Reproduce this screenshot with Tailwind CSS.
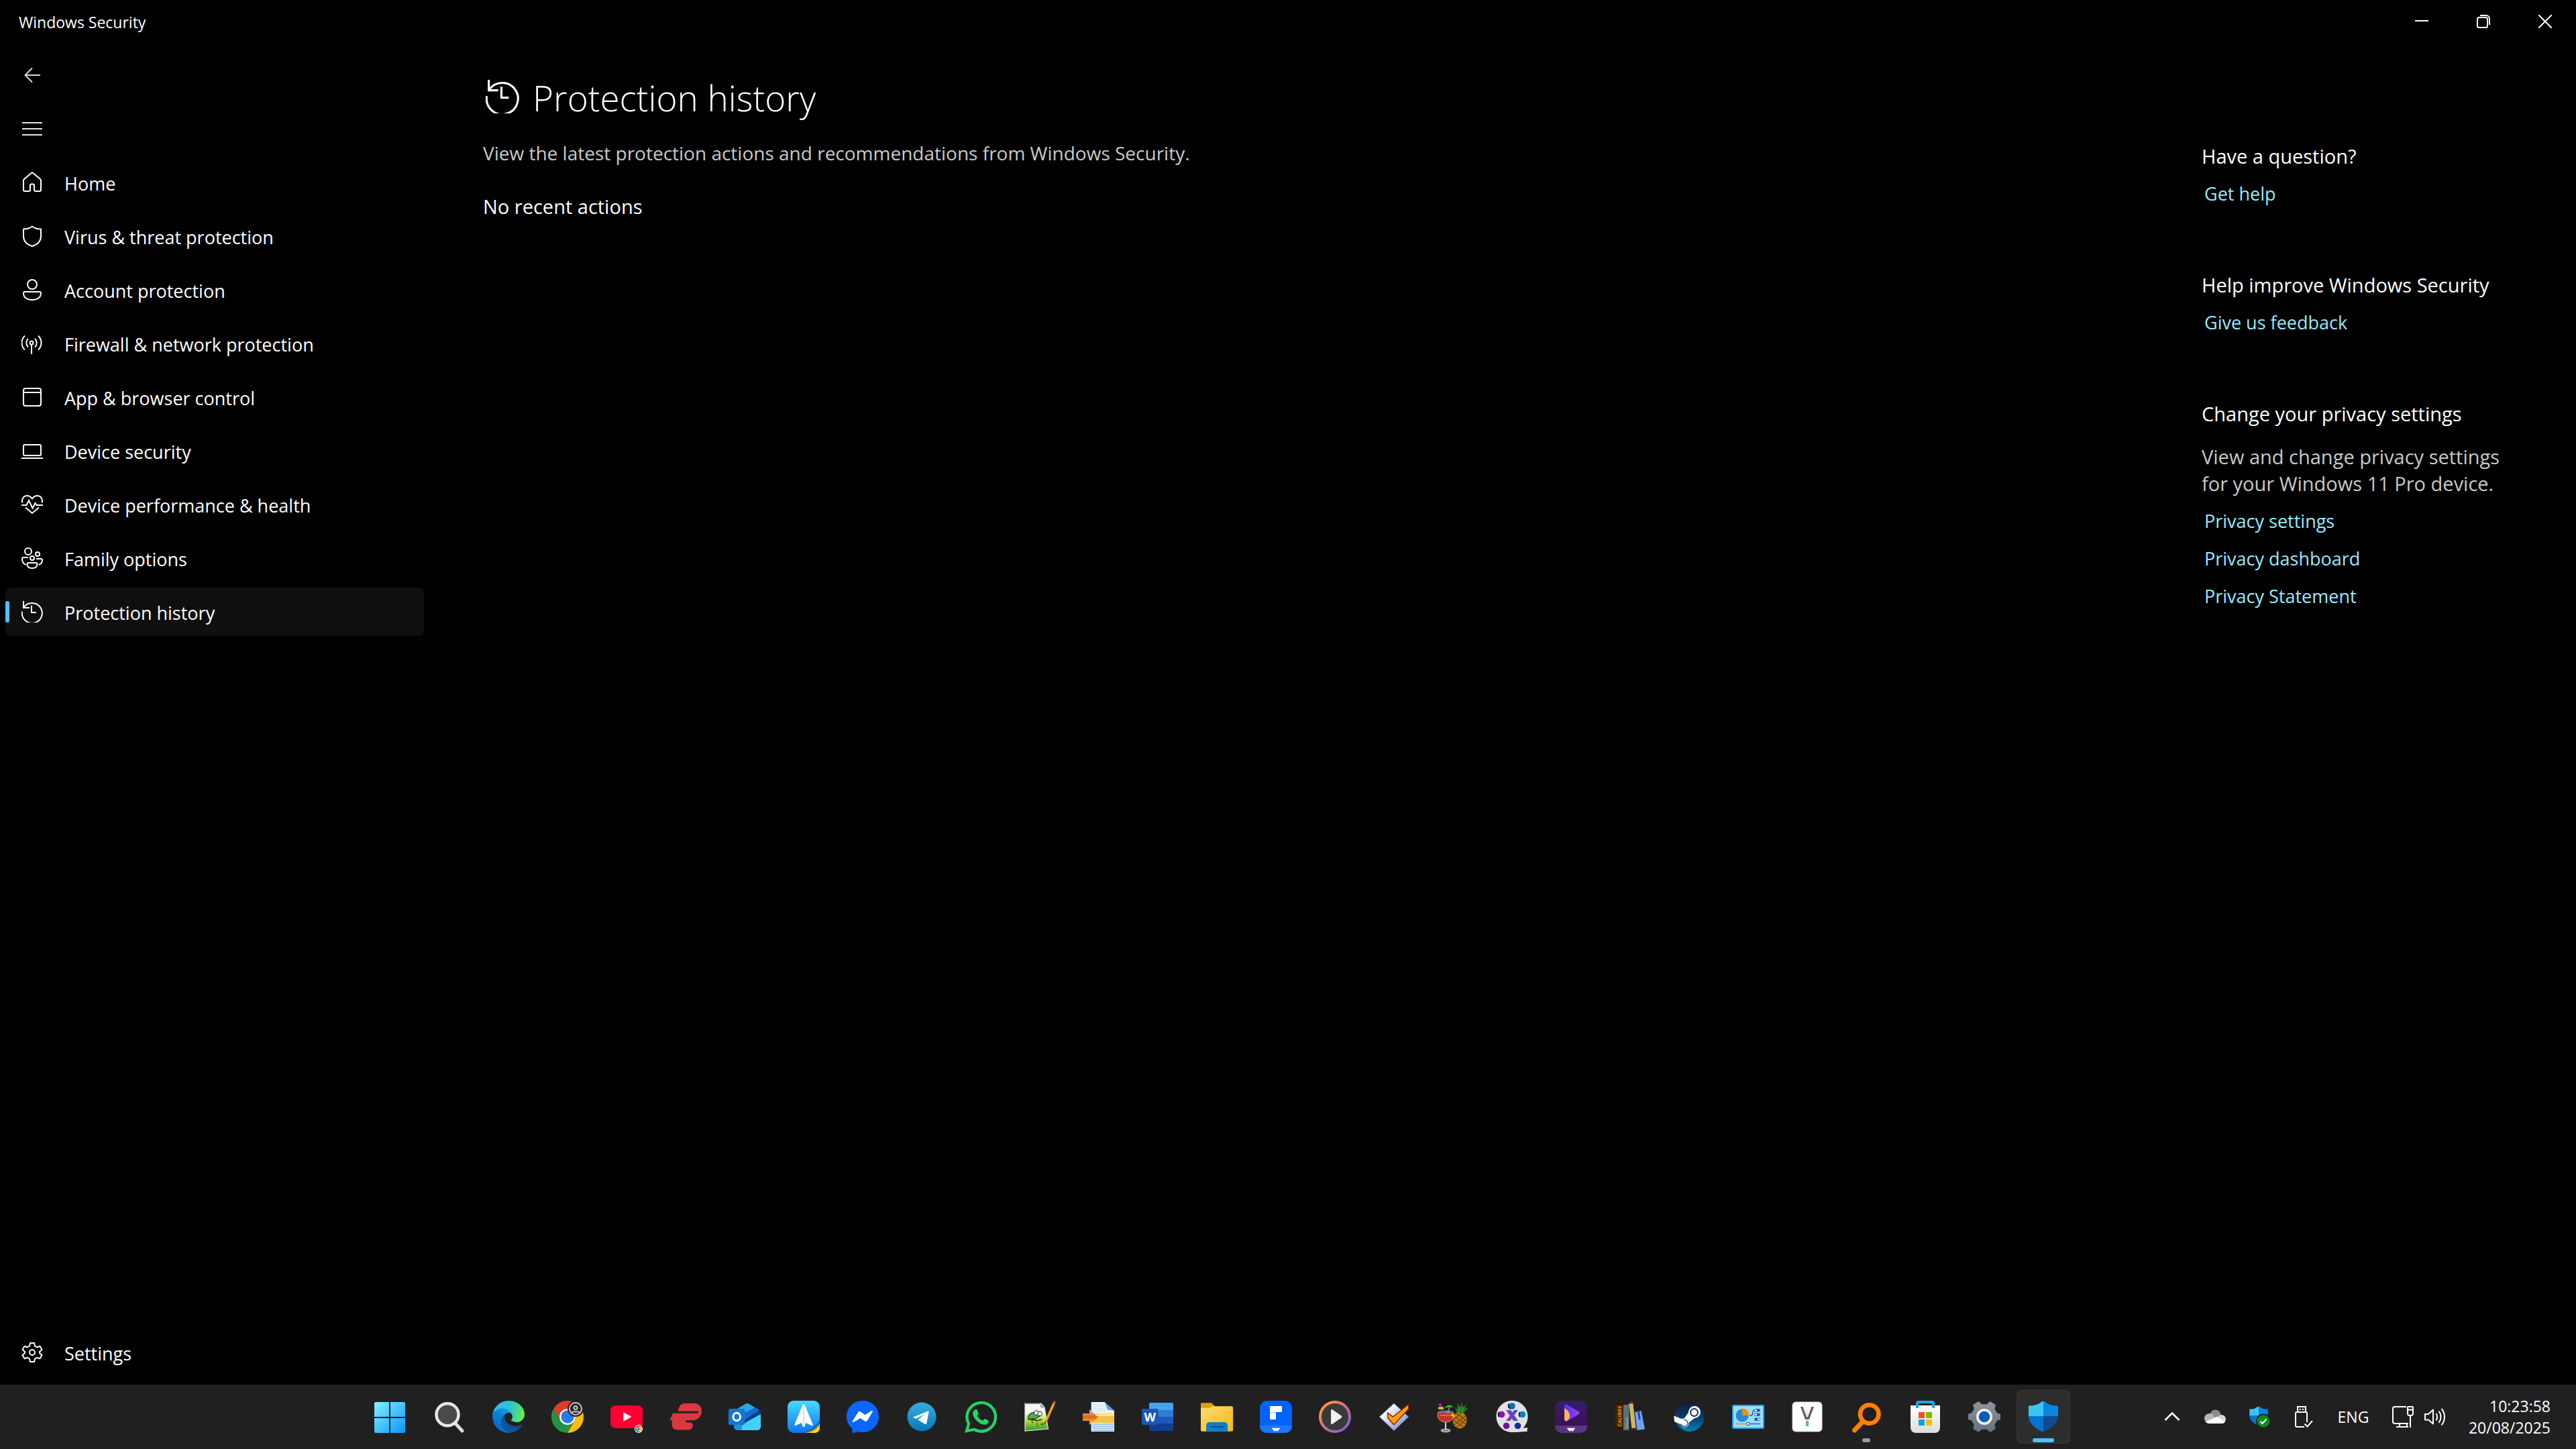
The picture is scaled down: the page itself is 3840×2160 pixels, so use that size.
<!DOCTYPE html>
<html lang="en">
<head>
    <meta charset="UTF-8">
    <meta name="viewport" content="width=device-width, initial-scale=1.0">
    <title>Windows Security</title>
    <script src="https://cdn.jsdelivr.net/npm/@tailwindcss/browser@4"></script>
</head>
<body class="min-h-screen flex flex-col bg-black text-white font-['Open_Sans',sans-serif] text-[27px] leading-10">
    <!-- Shared icons -->
    <svg class="hidden">
        <symbol id="history" viewBox="0 0 32 32">
            <g fill="none" stroke="currentColor" stroke-width="2">
                <path d="M3 0v10h9" />
                <path d="M3.3 9.6A15 15 0 1 1 1 15.5" />
                <path d="M15 6.5v10.500h7" />
            </g>
        </symbol>
        <symbol id="chrome" viewBox="0 0 48 48">
            <path fill="#dd3d2f" d="M24 12h20.780A24 24 0 0 0 3.200 12L13.600 30A12 12 0 0 1 24 12z" />
            <path fill="#249245" d="M13.600 30L3.200 12A24 24 0 0 0 24 48L34.400 30A12 12 0 0 1 13.600 30z" />
            <path fill="#f9bc10" d="M34.400 30L24 48A24 24 0 0 0 44.780 12H24A12 12 0 0 1 34.400 30z" />
            <circle cx="24" cy="24" r="12" fill="#fff" />
            <circle cx="24" cy="24" r="9.700" fill="#2a7af0" />
        </symbol>
        <symbol id="shield" viewBox="0 0 48 48">
            <path fill="#39c5f3" d="M24 1v22H2V7.500c9 0 14-1.500 18-5C21.500 1.300 22.500 1 24 1z" />
            <path fill="#0b84de" d="M24 1v22h22V7.500c-9 0-14-1.500-18-5C26.500 1.300 25.500 1 24 1z" />
            <path fill="#0472cf" d="M2 23h22v24C11 41 2 33 2 23z" />
            <path fill="#124a8d" d="M46 23H24v24c13-6 22-14 22-24z" />
        </symbol>
        <symbol id="wave" viewBox="0 0 12 6">
            <path d="M0 1.500L1.500 0 3 1.500 4.500 0 6 1.500 7.500 0 9 1.500 10.500 0 12 1.500 8 6 6 4 4 6z" fill="#fff" />
        </symbol>
    </svg>

    <!-- Title bar -->
    <header class="flex items-center justify-between h-16 pl-7">
        <span class="pt-0.5 text-[23px]">Windows Security</span>
        <div class="flex h-full">
            <button aria-label="Minimise" class="w-23 flex items-center justify-center">
                <svg class="size-5" viewBox="0 0 20 20" stroke="#fff" stroke-width="2"><path d="M0 9h20" /></svg>
            </button>
            <button aria-label="Restore" class="w-23 flex items-center justify-center">
                <svg class="size-5" viewBox="0 0 20 20" fill="none" stroke="#fff" stroke-width="2"><rect x="1" y="4" width="15" height="15" rx="2.500" /><path d="M5 1h9a5 5 0 0 1 5 5v9" /></svg>
            </button>
            <button aria-label="Close" class="w-23 flex items-center justify-center">
                <svg class="size-5" viewBox="0 0 20 20" stroke="#fff" stroke-width="2"><path d="M0 0l20 20M20 0L0 20" /></svg>
            </button>
        </div>
    </header>

    <div class="flex flex-1">
        <!-- Navigation -->
        <nav class="w-160 shrink-0 flex flex-col gap-2 px-2 py-3">
            <button aria-label="Back" class="w-20 h-18 flex items-center justify-center">
                <svg class="size-6" viewBox="0 0 24 24" fill="none" stroke="#d8d8d8" stroke-width="2"><path d="M12 1.500L1.500 12 12 22.500M1 12h23" /></svg>
            </button>
            <button aria-label="Menu" class="w-20 h-18 flex items-center justify-center">
                <svg class="w-[30px] h-6" viewBox="0 0 30 24" fill="none" stroke="#e6e6e6" stroke-width="2"><path d="M0 3h30M0 12h30M0 21h30" /></svg>
            </button>
            <a href="#" class="h-18 flex items-center gap-8 px-6 rounded-lg">
                <svg class="size-8" viewBox="0 0 32 32" fill="none" stroke="#fff" stroke-width="2"><path d="M3 13.500c0-1 .4-1.800 1-2.500L14.700 1.900a2 2 0 0 1 2.600 0L28 11c.6.700 1 1.500 1 2.500V27a2 2 0 0 1-2 2h-6a2 2 0 0 1-2-2v-7a1.500 1.500 0 0 0-1.500-1.500h-3A1.500 1.500 0 0 0 13 20v7a2 2 0 0 1-2 2H5a2 2 0 0 1-2-2z" /></svg>
                <span class="pt-1">Home</span>
            </a>
            <a href="#" class="h-18 flex items-center gap-8 px-6 rounded-lg">
                <svg class="size-8" viewBox="0 0 32 32" fill="none" stroke="#fff" stroke-width="2" stroke-linejoin="round"><path d="M16 1.500c3.500 2.800 8 4 13 4V16c0 8-5 12.500-13 15C8 28.500 3 24 3 16V5.500c5 0 9.500-1.200 13-4z" /></svg>
                <span class="pt-1">Virus &amp; threat protection</span>
            </a>
            <a href="#" class="h-18 flex items-center gap-8 px-6 rounded-lg">
                <svg class="size-8" viewBox="0 0 32 32" fill="none" stroke="#fff" stroke-width="2"><circle cx="16" cy="8" r="7" /><path d="M5 19h22a2 2 0 0 1 2 2c0 6-5 10-13 10S3 27 3 21a2 2 0 0 1 2-2z" /></svg>
                <span class="pt-1">Account protection</span>
            </a>
            <a href="#" class="h-18 flex items-center gap-8 px-6 rounded-lg">
                <svg class="size-8" viewBox="0 0 32 32" fill="none" stroke="#fff" stroke-width="2"><circle cx="15" cy="15" r="2.500" /><path d="M15 17.500V32M5 4.500a14.500 14.500 0 0 0 0 21M25 4.500a14.500 14.500 0 0 1 0 21M10 9a8.500 8.500 0 0 0 0 12.500M20 9a8.500 8.500 0 0 1 0 12.500" /></svg>
                <span class="pt-1">Firewall &amp; network protection</span>
            </a>
            <a href="#" class="h-18 flex items-center gap-8 px-6 rounded-lg">
                <svg class="size-8" viewBox="0 0 32 32" fill="none" stroke="#fff" stroke-width="2"><rect x="3" y="3" width="26" height="26" rx="3" /><path d="M3 9h26" /></svg>
                <span class="pt-1">App &amp; browser control</span>
            </a>
            <a href="#" class="h-18 flex items-center gap-8 px-6 rounded-lg">
                <svg class="size-8" viewBox="0 0 32 32" fill="none" stroke="#fff" stroke-width="2"><rect x="3" y="7" width="26" height="16" rx="2" /><path d="M0 27h32" /></svg>
                <span class="pt-1">Device security</span>
            </a>
            <a href="#" class="h-18 flex items-center gap-8 px-6 rounded-lg">
                <svg class="size-8" viewBox="0 0 32 32" fill="none" stroke="#fff" stroke-width="2"><path d="M1.500 13.500C-.5 7 4 3 8.500 3c3 0 5.500 1.500 7.500 4.500C18 4.500 20.500 3 23.500 3 28 3 32.500 7 30.500 13.500M0 17h7.500L11 10l5.500 11.500L20.500 14l2 3H32M6 20.500L16 29l10-8.500" /></svg>
                <span class="pt-1">Device performance &amp; health</span>
            </a>
            <a href="#" class="h-18 flex items-center gap-8 px-6 rounded-lg">
                <svg class="size-8" viewBox="0 0 32 32" fill="none" stroke="#fff" stroke-width="2"><circle cx="10" cy="6" r="5" /><circle cx="24" cy="10" r="3" /><circle cx="16" cy="16" r="3" /><path d="M10 15H3a2 2 0 0 0-2 2c0 5 2 7.500 5.500 9M22 17h7a2 2 0 0 1 2 2c0 4-2 6-5.500 7M10.500 23h11a2 2 0 0 1 2 2c0 4-3 6-7.500 6s-7.500-2-7.500-6a2 2 0 0 1 2-2z" /></svg>
                <span class="pt-1">Family options</span>
            </a>
            <a href="#" aria-current="page" class="relative h-18 flex items-center gap-8 px-6 rounded-lg bg-[#0f0f0f]">
                <span class="absolute left-0 top-5 w-1.5 h-8 rounded-full bg-[#4cc2ff]"></span>
                <svg class="size-8"><use href="#history" /></svg>
                <span class="pt-1">Protection history</span>
            </a>
            <a href="#" class="mt-auto h-18 flex items-center gap-8 px-6 rounded-lg">
                <svg class="size-8" viewBox="0 0 32 32" fill="none" stroke="#fff" stroke-width="2" stroke-linejoin="round"><circle cx="16" cy="16" r="4" /><path d="M13 2h6l1 4.500 3 1.700 4.500-1.500 3 5.200L27 15v2l3.500 3.100-3 5.200-4.500-1.500-3 1.700-1 4.500h-6l-1-4.500-3-1.700-4.500 1.500-3-5.200L5 17v-2l-3.500-3.100 3-5.200L9 8.200l3-1.700z" /></svg>
                <span class="pt-1">Settings</span>
            </a>
        </nav>

        <!-- Page content -->
        <main class="flex-1 pl-20 pt-11">
            <h1 class="flex items-center gap-5 pl-1 h-18 text-[53px] font-[350]">
                <svg class="size-[50px]"><use href="#history" /></svg>
                <span class="pt-1">Protection history</span>
            </h1>
            <p class="mt-7 text-[28px] text-[#c9c9c9]">View the latest protection actions and recommendations from Windows Security.</p>
            <p class="mt-10 text-[29px]">No recent actions</p>
        </main>

        <!-- Help links -->
        <aside class="w-140 shrink-0 pl-0.5 pt-[149px]">
            <section class="flex flex-col items-start gap-4">
                <h2 class="text-[29px]">Have a question?</h2>
                <a href="#" class="pl-1 text-[#99ebff]">Get help</a>
            </section>
            <section class="mt-24 flex flex-col items-start gap-4">
                <h2 class="text-[29px]">Help improve Windows Security</h2>
                <a href="#" class="pl-1 text-[#99ebff]">Give us feedback</a>
            </section>
            <section class="mt-24 flex flex-col items-start gap-4">
                <h2 class="text-[29px]">Change your privacy settings</h2>
                <p class="mt-2 text-[29px] text-[#c9c9c9]">View and change privacy settings<br>for your Windows 11 Pro device.</p>
                <a href="#" class="pl-1 text-[#99ebff]">Privacy settings</a>
                <a href="#" class="pl-1 text-[#99ebff]">Privacy dashboard</a>
                <a href="#" class="pl-1 text-[#99ebff]">Privacy Statement</a>
            </section>
        </aside>
    </div>

    <!-- Taskbar -->
    <footer class="flex items-center justify-between h-24 pl-[542px] pr-[38px] bg-[#202020]">
        <div class="flex gap-2">
            <button aria-label="Start" class="size-20 flex items-center justify-center">
                <svg class="size-12" viewBox="0 0 48 48">
                    <defs><linearGradient id="win" x1="0" y1="0" x2="48" y2="48" gradientUnits="userSpaceOnUse"><stop stop-color="#83f6ff" /><stop offset="1" stop-color="#0893ff" /></linearGradient></defs>
                    <path fill="url(#win)" d="M2 2h20v22H0V4a2 2 0 0 1 2-2zM24 2h20a2 2 0 0 1 2 2v20H24zM0 26h22v22H2a2 2 0 0 1-2-2zM24 26h22v20a2 2 0 0 1-2 2H24z" />
                </svg>
            </button>
            <button aria-label="Search" class="size-20 flex items-center justify-center">
                <svg class="size-12" viewBox="0 0 48 48"><path d="M33 34l10 11" stroke="#d9dadf" stroke-width="5" stroke-linecap="round" /><circle cx="21" cy="20.700" r="16.500" fill="#4a4a4a" stroke="#e6e7ea" stroke-width="4.500" /></svg>
            </button>
            <button aria-label="Microsoft Edge" class="size-20 flex items-center justify-center">
                <svg class="size-12" viewBox="0 0 256 256">
                    <defs>
                        <linearGradient id="edgeA" x1="60" y1="177" x2="240" y2="177" gradientUnits="userSpaceOnUse"><stop stop-color="#0c59a4" /><stop offset="1" stop-color="#114a8b" /></linearGradient>
                        <linearGradient id="edgeB" x1="150" y1="90" x2="40" y2="230" gradientUnits="userSpaceOnUse"><stop stop-color="#1b9de2" /><stop offset=".4" stop-color="#0a84d8" /><stop offset="1" stop-color="#0667c9" /></linearGradient>
                        <linearGradient id="edgeC" x1="20" y1="60" x2="250" y2="110" gradientUnits="userSpaceOnUse"><stop stop-color="#35b8f1" /><stop offset=".5" stop-color="#2dc5cf" /><stop offset="1" stop-color="#66eb50" /></linearGradient>
                    </defs>
                    <path fill="url(#edgeA)" d="M231 190.500c-3.400 1.800-6.900 3.400-10.500 4.700a101.500 101.500 0 0 1-35.800 6.500c-47.200 0-88.300-32.500-88.300-74.200a31.500 31.500 0 0 1 16.400-27.300c-42.700 1.800-53.700 46.300-53.700 72.300 0 73.800 68 81.200 82.600 81.200 7.900 0 19.800-2.300 27-4.600l1.300-.4a128.300 128.300 0 0 0 66.600-52.800 4 4 0 0 0-5.600-5.400z" />
                    <path fill="url(#edgeB)" d="M105.700 241.400a79.200 79.200 0 0 1-22.700-21.300 80.700 80.700 0 0 1 29.800-119.900c3.200-1.500 8.500-4.100 15.600-4a32.400 32.400 0 0 1 25.700 13 31.900 31.900 0 0 1 6.300 18.700c0-.2 24.500-79.600-80-79.600-43.900 0-80 41.600-80 78.200a130.200 130.200 0 0 0 12.100 56 128 128 0 0 0 156.400 67 75.500 75.500 0 0 1-62.800-8z" />
                    <path fill="url(#edgeC)" d="M152.300 148.900c-.9 1-3.400 2.500-3.400 5.600 0 2.600 1.700 5.200 4.800 7.300 14.300 10 41.400 8.600 41.500 8.600a59.600 59.600 0 0 0 30.300-8.300 61.400 61.400 0 0 0 30.400-52.900c.3-22.400-8-37.300-11.300-43.900C223.500 23.900 177.700 0 128 0A128 128 0 0 0 0 126.200c.5-36.500 36.800-66 80-66 3.500 0 23.500.3 42 10a72.600 72.600 0 0 1 30.900 29.300c6.100 10.600 7.200 24.100 7.200 29.500s-2.700 13.300-7.800 19.900z" />
                </svg>
            </button>
            <button aria-label="Google Chrome" class="size-20 flex items-center justify-center">
                <svg class="size-12" viewBox="0 0 48 48"><use href="#chrome" /><circle cx="36" cy="12" r="12" fill="#202020" /><circle cx="36" cy="12" r="9" fill="#252525" stroke="#c9c9c9" stroke-width="2" /><circle cx="36" cy="10.500" r="2.600" fill="none" stroke="#c9c9c9" stroke-width="2" /><path d="M29.500 18c2-2.500 11-2.500 13 0" fill="none" stroke="#c9c9c9" stroke-width="2" /></svg>
            </button>
            <button aria-label="YouTube" class="size-20 flex items-center justify-center">
                <svg class="size-12" viewBox="0 0 48 48"><path fill="#ff0033" d="M6 7.500C14 6.700 34 6.700 42 7.500c4 .5 6 3 6 7v19c0 4-2 6.500-6 7-8 .8-28 .8-36 0-4-.5-6-3-6-7v-19c0-4 2-6.500 6-7z" /><path fill="#fff" d="M19 17l12.500 7L19 31z" /><circle cx="42" cy="42" r="6" fill="#fff" /><use href="#chrome" x="37" y="37" width="10" height="10" /></svg>
            </button>
            <button aria-label="ExpressVPN" class="size-20 flex items-center justify-center">
                <svg class="size-12" viewBox="0 0 48 48" fill="#da3940"><path d="M12.500 15.700C14 8.500 17 4 23 4h14c6.500 0 11 5 11 11 0 9-7 14.300-13 14.300H.4L5 18.700h35c2.500 0 3.500-1 3.500-3z" /><path d="M4.500 29h19c1 3 2.500 3.500 5 3.500h2c7 0 5 11-2 11H12c-8 0-10-7-7.500-14.500z" /></svg>
            </button>
            <button aria-label="Outlook" class="size-20 flex items-center justify-center">
                <svg class="size-12" viewBox="0 0 48 48"><path fill="#2aa6e6" d="M8 15L25 5c2-1.300 4-1.300 6 0l14 9c2 1 3 2.500 3 5l-20 9H8z" /><path fill="#0f6cd0" d="M24 18l16-8 6 4-22 14z" /><path fill="#0b3d91" d="M24 28l22-14c1.500 1 2 2.500 2 5L26 34z" /><path fill="#1d8fe0" d="M8 34l14-2v12h-8c-4 0-6-2-6-6z" /><path fill="#3fd3fa" d="M20 44c-2-6 3-10 8-13l20-11v18c0 4-2 6-6 6z" /><rect y="12" width="24.500" height="24" rx="2" fill="#1377d2" /><ellipse cx="12.200" cy="24" rx="5.300" ry="5.800" fill="none" stroke="#fff" stroke-width="3" /></svg>
            </button>
            <button aria-label="Spark" class="size-20 flex items-center justify-center">
                <svg class="size-12" viewBox="0 0 48 48">
                    <defs><linearGradient id="spark" x2="0" y2="1"><stop stop-color="#46dcff" /><stop offset="1" stop-color="#1173f0" /></linearGradient></defs>
                    <rect width="48" height="48" rx="9" fill="url(#spark)" /><path fill="#0b60d6" d="M20 48c12-2 22-9 28-20v11c0 6-3 9-9 9z" /><path fill="#ff9c12" d="M26 48c10-2 18-7 22-14v5c0 6-3 9-9 9z" /><path fill="#ffe000" d="M31 48c8-2 14-6 17-11v2c0 6-3 9-9 9z" /><path fill="#fff" d="M24 5.500c1 0 1.600.8 2 2L37.500 35c.7 2-.5 2.500-2 1.800L27 33l-1.500 6h-3L21 33l-8.500 3.800c-1.500.7-2.700.2-2-1.800L22 7.500c.4-1.200 1-2 2-2z" /><path d="M24 7v32" stroke="#b9c9dc" stroke-width="1.200" />
                </svg>
            </button>
            <button aria-label="Messenger" class="size-20 flex items-center justify-center">
                <svg class="size-12" viewBox="0 0 48 48"><path fill="#0a66ff" d="M24 0c13.500 0 24 10 24 23.500S37.500 47 24 47c-2.500 0-5-.4-7-1l-6 2c-1.500.5-2.500-.2-2.600-2L8.200 41C3 37 0 31 0 23.500 0 10 10.500 0 24 0z" /><path fill="#fff" d="M9 30l8-12.500c1-1.600 2.800-1.800 4.200-.8l6.300 4.600L37 15c1.500-.8 2.500.3 1.700 1.600L31 29.500c-1 1.600-2.800 1.800-4.200.8L20.500 26 10.500 32c-1.300.7-2.300-.8-1.500-2z" /></svg>
            </button>
            <button aria-label="Telegram" class="size-20 flex items-center justify-center">
                <svg class="size-12" viewBox="0 0 48 48">
                    <defs><linearGradient id="tg" x2="0" y2="1"><stop stop-color="#36ace4" /><stop offset="1" stop-color="#0878b5" /></linearGradient></defs>
                    <circle cx="24" cy="24" r="21.500" fill="url(#tg)" /><path fill="#fff" d="M11 24.500L33 15.700c1.300-.4 1.800.2 1.500 1.500l-3.300 16.500c-.3 1.500-1.200 1.800-2.400 1L18.500 28.500 28 20l-12.500 7z" />
                </svg>
            </button>
            <button aria-label="WhatsApp" class="size-20 flex items-center justify-center">
                <svg class="size-12" viewBox="0 0 48 48"><path fill="none" stroke="#25d366" stroke-width="4.300" d="M3 45l3-10.500A21.300 21.300 0 1 1 14.500 43z" /><path fill="#25d366" d="M15 13.500c.8-.9 2.800-1 3.500.3l2 4.700c.3.800 0 1.600-1.800 3.700 2 3.800 4.700 6 8.300 7.500 2-2.600 2.500-3 3.500-2.600l4.700 2.300c.8.500.8 1 .5 2.400-.7 2.700-3.700 4.200-6.200 4C21 35.200 12.500 26 12 19.500c0-2.500 1.300-4.600 3-6z" /></svg>
            </button>
            <button aria-label="Notepad++" class="size-20 flex items-center justify-center">
                <svg class="size-12" viewBox="0 0 48 48">
                    <defs><linearGradient id="npp" x2="0" y2="1"><stop offset=".3" stop-color="#f7f9f2" /><stop offset=".6" stop-color="#b9e34a" /><stop offset="1" stop-color="#2e9a1c" /></linearGradient></defs>
                    <path fill="url(#npp)" stroke="#e8e8e8" stroke-width="1.200" d="M2 4h24l5 6 5.500 32L2 45z" /><path d="M3 4h22" stroke="#444" stroke-width="2" stroke-dasharray="1.500 1" /><path fill="#9a9a9a" d="M25 4l6 7-6-1z" /><path fill="#4fb04a" d="M6 26c1-7 8-10 15-8l3 5-8 5c-4 1-5 3-2 5" stroke="#1f3d1a" stroke-width="1.200" /><circle cx="19" cy="18" r="3.500" fill="#fff" stroke="#222" /><circle cx="24" cy="19.500" r="3.300" fill="#fff" stroke="#222" /><path d="M6 28l8-1 5 3 8-2" stroke="#222" fill="none" stroke-width="1.500" /><path d="M20 32v7M24 35h7M28 32v6" stroke="#4a7a30" stroke-width="1.500" /><path d="M45 4L32.500 32" stroke="#f0a020" stroke-width="3.500" /><path d="M46.500 1L45 4.500" stroke="#d04a50" stroke-width="3.500" /><path d="M33 31l-2 4" stroke="#7c5a20" stroke-width="2" />
                </svg>
            </button>
            <button aria-label="File import" class="size-20 flex items-center justify-center">
                <svg class="size-12" viewBox="0 0 48 48">
                    <defs><linearGradient id="arr" x2="0" y2="1"><stop stop-color="#f0b4a8" /><stop offset=".5" stop-color="#d9661c" /><stop offset="1" stop-color="#ffd23c" /></linearGradient></defs>
                    <path fill="#eef5fb" d="M12.600 2h20L47 15v31H12.600z" /><path d="M14 6h18M14 9h20M14 12h22M14 15h22" stroke="#c3daee" /><path fill="#f2c14a" d="M12.600 18H47v15H12.600z" /><path fill="#fbe391" d="M12.600 18H47v5H12.600z" /><path d="M14 35h32M14 38h32M14 41h32M14 44h32" stroke="#84b4e0" stroke-width="1.500" /><path fill="#5d9fd6" d="M32.600 2L47 15l-10-1.500z" /><path fill="url(#arr)" d="M0 19h10v-6l13 11.500L10 36v-6H0z" />
                </svg>
            </button>
            <button aria-label="Word" class="size-20 flex items-center justify-center">
                <svg class="size-12" viewBox="0 0 48 48"><path fill="#41a5ee" d="M13 3h32a2 2 0 0 1 2 2v9H11V5a2 2 0 0 1 2-2z" /><path fill="#2b7cd3" d="M11 14h36v10H11z" /><path fill="#185abd" d="M11 24h36v10H11z" /><path fill="#103f91" d="M11 34h36v9a2 2 0 0 1-2 2H13a2 2 0 0 1-2-2z" /><rect y="12" width="24.700" height="24" rx="2" fill="#1b56b8" /><text x="12.300" y="30.500" text-anchor="middle" font-size="18" font-weight="700" fill="#fff">W</text></svg>
            </button>
            <button aria-label="File Explorer" class="size-20 flex items-center justify-center">
                <svg class="size-12" viewBox="0 0 48 48">
                    <defs><linearGradient id="fold" x2="1" y2="1"><stop stop-color="#ffdc72" /><stop offset="1" stop-color="#f9b712" /></linearGradient></defs>
                    <path fill="#dfa000" d="M0 5c0-1 .7-1.700 2-1.700h12c1.500 0 2.500.4 3.500 1.500L20.500 8V16H0z" /><path fill="url(#fold)" d="M0 12.500c0-1 .7-1.700 2-1.700h11c2 0 3.500-2.500 5.500-2.500H46c1.300 0 2 .7 2 2V44c0 1-.7 1.700-2 1.700H2c-1.300 0-2-.7-2-1.700z" /><path fill="#0f7dc6" d="M8 45.700V37c0-3 2-5 5-5h22c3 0 5 2 5 5v8.700z" /><path d="M14 39h20" stroke="#0a4a86" stroke-width="2" />
                </svg>
            </button>
            <button aria-label="PDFelement" class="size-20 flex items-center justify-center">
                <svg class="size-12" viewBox="0 0 48 48"><rect width="48" height="48" rx="11" fill="#0062ff" /><path fill="#1f75ff" d="M0 37.500c16-2 32-2 48 0C48 44 44 48 37 48H11C4 48 0 44 0 37.500z" /><path fill="#fff" d="M15 8h18v9H24v11h-9z" /><path fill="#bcd5ff" d="M15 17h9v2h-9z" /><use href="#wave" x="18" y="40" width="12" height="6" /></svg>
            </button>
            <button aria-label="Media Player" class="size-20 flex items-center justify-center">
                <svg class="size-12" viewBox="0 0 48 48">
                    <defs><linearGradient id="ring" x2="1" y2="1"><stop offset=".2" stop-color="#ff9142" /><stop offset=".5" stop-color="#c9708c" /><stop offset=".9" stop-color="#8560d0" /></linearGradient></defs>
                    <circle cx="24" cy="24" r="22" fill="#3a3a3a" stroke="url(#ring)" stroke-width="4" /><path fill="#f2f2f2" d="M18 14.500c0-1.500 1-2 2.300-1.200L33.500 22.500c1 .8 1 2.200 0 3L20.300 34.700c-1.300.8-2.300.3-2.300-1.200z" />
                </svg>
            </button>
            <button aria-label="Tasks" class="size-20 flex items-center justify-center">
                <svg class="size-12" viewBox="0 0 48 48">
                    <defs><linearGradient id="dia" x2="1" y2="1"><stop offset=".3" stop-color="#f1f4fb" /><stop offset=".7" stop-color="#9fb0d8" /><stop offset="1" stop-color="#5868a8" /></linearGradient></defs>
                    <path fill="url(#dia)" stroke="#7d89b5" d="M24 4l21.500 20L24 44.500 2.300 24z" /><path fill="#f9a00c" stroke="#8c1f06" stroke-width="1.500" d="M14.500 18l8 6L45.500 5.500 46 12 24 36l-9-10z" />
                </svg>
            </button>
            <button aria-label="Cocktail" class="size-20 flex items-center justify-center">
                <svg class="size-12" viewBox="0 0 48 48">
                    <ellipse cx="34" cy="29" rx="10.500" ry="12.500" fill="#b97c1a" /><path d="M25 23l18 12M24 29l16 10M28 18l16 12M43 22L26 36M44 28L29 40M38 17L24 29" stroke="#6e430b" stroke-width="1.300" /><path fill="#1f7a1c" d="M30 18l-3-8 4 3-1-10 5 8 2-10 2 10 6-7-3 8 5-1-8 7z" /><path d="M33 17l1-9M37 17l2-8" stroke="#4fb33a" /><path d="M13 32v11" stroke="#d8d8d8" stroke-width="2" /><ellipse cx="13" cy="44.500" rx="7" ry="2.300" fill="#8c8c8c" stroke="#e0e0e0" /><path fill="#c23424" stroke="#c9a0a0" d="M2 17c4-2 18-2 22 0 3 8-2 15-11 15S-1 25 2 17z" /><ellipse cx="13" cy="17" rx="10" ry="2.500" fill="#777" /><path d="M4 22h18" stroke="#ff5a44" stroke-width="2" /><path d="M6 6l4 14" stroke="#3d4fd0" stroke-width="1.500" /><circle cx="5" cy="6" r="2.200" fill="#e0148c" /><ellipse cx="6" cy="11" rx="4.500" ry="2" fill="#c8c04a" /><path fill="#3ed12a" d="M12 11c2-5 9-6 12-1-4-1-8-1-12 1z" /><path d="M19 9l-3 9" stroke="#ccc" /><path d="M22 20l4 4" stroke="#f0e000" stroke-width="2.500" />
                </svg>
            </button>
            <button aria-label="Video converter" class="size-20 flex items-center justify-center">
                <svg class="size-12" viewBox="0 0 48 48">
                    <defs><linearGradient id="xg" x2="1"><stop stop-color="#a426c8" /><stop offset="1" stop-color="#2f5fa8" /></linearGradient></defs>
                    <path fill="#dfe1e6" d="M24 0c13 0 23.500 10.500 23.500 23.500 0 7-3 13-7 17.500l6.500-1-.5 6c-7-.5-14 1.500-22.500 1C11 47 .5 36.500.5 23.500S11 0 24 0z" /><circle cx="24" cy="8" r="4.800" fill="#0b6fae" /><circle cx="8.500" cy="20.500" r="4.800" fill="#8a12b4" /><circle cx="39.500" cy="20.500" r="4.800" fill="#127fc4" /><circle cx="15.500" cy="37.500" r="4.800" fill="#6a1498" /><circle cx="32.500" cy="37.500" r="4.800" fill="#182c9c" /><path d="M19.500 4.500a5 5 0 0 0 2 7.500M5 17a5 5 0 0 0 0 7M36 17a5 5 0 0 0 0 7" stroke="#101828" stroke-width="2" fill="none" /><path fill="url(#xg)" d="M15 14h7l11 16h-7zM27 14h6L21 30h-6z" />
                </svg>
            </button>
            <button aria-label="UniConverter" class="size-20 flex items-center justify-center">
                <svg class="size-12" viewBox="0 0 48 48">
                    <defs>
                        <linearGradient id="uc" x2="0" y2="1"><stop stop-color="#371b70" /><stop offset=".7" stop-color="#3a1255" /></linearGradient>
                        <linearGradient id="up" x2="1"><stop stop-color="#3f3cf5" /><stop offset="1" stop-color="#a13df5" /></linearGradient>
                    </defs>
                    <rect width="48" height="48" rx="11" fill="url(#uc)" /><path fill="#5a3680" d="M0 37h48c0 7-4 11-11 11H11C4 48 0 44 0 37z" /><path fill="url(#up)" d="M14 8c0-2 2-3 4-2l17 10c2 1.300 2 3 0 4.500L19 30c4-9 1-15-5-18z" /><path fill="#ffb45c" d="M14 11c8 5 11 12 5 18.500-2.500 2-5 .5-5-2z" /><use href="#wave" x="18" y="40" width="12" height="6" />
                </svg>
            </button>
            <button aria-label="calibre" class="size-20 flex items-center justify-center">
                <svg class="size-12" viewBox="0 0 48 48"><path fill="#4a2206" d="M2.500 2h11v42h-11z" /><path fill="#2c1302" d="M2.500 3h11v3h-11zM2.500 40h11v3h-11z" /><text transform="translate(11.200 38.500) rotate(-90)" font-size="7.500" font-weight="700" fill="#d99a1c">CALIBRE</text><path fill="#5b7279" d="M14 6h8.500v38H14z" /><text transform="translate(20.500 41) rotate(-90)" font-size="6" fill="#b9cdd1">Goyal</text><path fill="#d3b467" d="M22 2l6-.5L33 43h-6.500z" /><path fill="#5a1a1a" d="M22 2l6-.5.3 2.500-6 .5zM26.200 41l6.500-.5.3 3H26.500z" /><path fill="#6fa1f5" d="M31 17l9.500-2L46 42.500 34.500 44z" /><path fill="#1b3fc4" d="M35 16.500l3-.6 1.500 12-2.500.5z" /></svg>
            </button>
            <button aria-label="Steam" class="size-20 flex items-center justify-center">
                <svg class="size-12" viewBox="0 0 48 48">
                    <defs><linearGradient id="st" x2="0" y2="1"><stop stop-color="#131a3a" /><stop offset=".5" stop-color="#0d3a6a" /><stop offset="1" stop-color="#0a80b8" /></linearGradient></defs>
                    <circle cx="24.500" cy="24" r="22" fill="url(#st)" /><path fill="#fff" d="M1.500 22.500L13 27.300c1-.6 2-.9 3.500-.9L23 17.500A9 9 0 1 1 32 26l-8.500 6.500c0 9-10.500 9.500-12.500 2.500l-8.500-3.500c-1-3-1.200-6-1-9z" /><circle cx="31.500" cy="17.500" r="5.500" fill="#fff" stroke="#12305a" stroke-width="2" /><path d="M12 34.500a5 5 0 1 0 4-6" fill="none" stroke="#12508a" stroke-width="1.500" />
                </svg>
            </button>
            <button aria-label="Control Panel" class="size-20 flex items-center justify-center">
                <svg class="size-12" viewBox="0 0 48 48"><rect y="6" width="48" height="36" rx="2" fill="#1f9fe6" /><rect x="2" y="8" width="44" height="32" rx="1" fill="#9bdcf8" /><circle cx="15" cy="22" r="9.500" fill="#1c8ed8" /><path fill="#f28c13" d="M15 11.500V22h10A10 10 0 0 0 15 11.500z" /><path d="M26 22h3c3 0 0-8 5-8" fill="none" stroke="#155a9c" stroke-width="1.500" /><rect x="33" y="12" width="9" height="4.500" rx="2.200" fill="#1565a8" /><rect x="33" y="18.500" width="9" height="4.500" rx="2.200" fill="#1565a8" /><rect x="33" y="25.500" width="9" height="4.500" rx="2.200" fill="#1565a8" /><circle cx="35.500" cy="14.200" r="1.500" fill="#fff" /><circle cx="35.500" cy="20.700" r="1.500" fill="#fff" /><circle cx="39.500" cy="27.700" r="1.500" fill="#fff" /><path d="M6 34.500h16" stroke="#f28c13" stroke-width="1.500" /><path d="M24 34.500h18" stroke="#0f7ac8" stroke-width="1.500" /><rect x="22" y="32.500" width="3.500" height="4" fill="#fff" stroke="#1565a8" /></svg>
            </button>
            <button aria-label="V app" class="size-20 flex items-center justify-center">
                <svg class="size-12" viewBox="0 0 48 48"><rect x="2" y="2" width="44" height="44" rx="5" fill="#fff" stroke="#d5d5d5" /><path d="M24 27L17 10M24 27V10M24 27L31 10M24 27L20.500 10M24 27L27.500 10" stroke="#dcdcdc" stroke-width="1" /><path fill="#5c5c5c" d="M14 9h3.500L23 24.500h2L30.500 9H34L27 28h-6z" /><path fill="#4fb3d6" d="M22 30h4v9l-2-1.500L22 39z" /></svg>
            </button>
            <button aria-label="Everything" class="relative size-20 flex items-center justify-center">
                <svg class="size-12" viewBox="0 0 48 48" fill="none" stroke="#ff8000"><circle cx="28.700" cy="20" r="13.800" stroke-width="6.500" /><path d="M18.500 31.500L6.500 44" stroke-width="7" stroke-linecap="round" /></svg>
                <span class="absolute bottom-0.5 w-3 h-1.5 rounded-full bg-[#9a9a9a]"></span>
            </button>
            <button aria-label="Microsoft Store" class="size-20 flex items-center justify-center">
                <svg class="size-12" viewBox="0 0 48 48">
                    <defs><linearGradient id="bag" x2="0" y2="1"><stop stop-color="#fff" /><stop offset="1" stop-color="#dcdcdc" /></linearGradient></defs>
                    <path fill="url(#bag)" d="M2 7h44v32c0 6-3 9-8 9H10c-5 0-8-3-8-9z" /><path fill="none" stroke="#1fa9ea" stroke-width="4" d="M12 11V4c0-1.300.7-2 2-2h20c1.300 0 2 .7 2 2v7" /><path fill="#f25022" d="M14 17h9v9h-9z" /><path fill="#7fba00" d="M25 17h9v9h-9z" /><path fill="#00a4ef" d="M14 28h9v9h-9z" /><path fill="#ffb900" d="M25 28h9v9h-9z" />
                </svg>
            </button>
            <button aria-label="Settings" class="size-20 flex items-center justify-center">
                <svg class="size-12" viewBox="0 0 48 48">
                    <defs><linearGradient id="gear" x2="0" y2="1"><stop stop-color="#8d959c" /><stop offset="1" stop-color="#66717c" /></linearGradient></defs>
                    <path fill="url(#gear)" stroke="url(#gear)" stroke-width="1.500" stroke-linejoin="round" d="M15.500 2l4.500 4h8l4.500-4 7.500 4.500-1.500 6 4 6.500 5 1.500v7L42.500 29l-4 6.500 1.500 6-7.500 4.500-4.500-4h-8l-4.500 4L8 41.500l1.500-6-4-6.500-5-1.500v-7l5-1.500 4-6.500-1.500-6z" /><circle cx="24" cy="24" r="12" fill="#efefef" /><circle cx="24" cy="24" r="8.300" fill="#0c5cb0" />
                </svg>
            </button>
            <button aria-label="Windows Security" class="relative size-20 flex items-center justify-center rounded-lg border-2 border-[#333333] bg-[#2d2d2d]">
                <svg class="size-12"><use href="#shield" /></svg>
                <span class="absolute bottom-0 w-8 h-1.5 rounded-full bg-[#4cc2ff]"></span>
            </button>
        </div>

        <!-- System tray -->
        <div class="flex items-center text-[23px] leading-8">
            <button aria-label="Show hidden icons" class="w-16 flex justify-center">
                <svg class="size-8" viewBox="0 0 32 32" fill="none" stroke="#fff" stroke-width="2.500"><path d="M5.500 21L16 10.500 26.500 21" /></svg>
            </button>
            <button aria-label="OneDrive" class="w-16 flex justify-center">
                <svg class="size-8" viewBox="0 0 32 32"><circle cx="16.500" cy="13.500" r="8" fill="#8c8c8c" /><circle cx="7.500" cy="18.500" r="7.500" fill="#b9b9b9" /><circle cx="25.500" cy="19.500" r="6.500" fill="#d6d6d6" /><path fill="#fff" d="M2 23.500l16.500-7.800L31 23c-1 2-2.500 3-5 3H7.500c-2.500 0-4.500-1-5.500-2.500z" /></svg>
            </button>
            <button aria-label="Windows Security status" class="w-17 flex justify-center">
                <svg class="size-8" viewBox="0 0 32 32"><use href="#shield" x="0" y="0" width="30" height="30" /><circle cx="22" cy="22.500" r="11" fill="#202020" /><circle cx="22" cy="22.500" r="9.300" fill="#0f8a1d" /><path d="M17.500 23l3 3 6-6.500" fill="none" stroke="#fff" stroke-width="2" /></svg>
            </button>
            <button aria-label="Eject media" class="w-16 flex justify-center">
                <svg class="size-8" viewBox="0 0 32 32" fill="none" stroke="#fff" stroke-width="2"><path d="M7 9V1h12v8M17 31H6a2 2 0 0 1-2-2V11a2 2 0 0 1 2-2h13a2 2 0 0 1 2 2v13" /><path d="M9.500 5h2.500M14 5h2.500M17.500 26.500l4 4 7.500-8.500" /></svg>
            </button>
            <button class="w-21 text-center">ENG</button>
            <button aria-label="Network and volume" class="w-26 flex justify-center gap-4 ml-1">
                <svg class="size-8" viewBox="0 0 32 32" fill="none" stroke="#fff" stroke-width="2"><path d="M21 1H4a3 3 0 0 0-3 3v19a3 3 0 0 0 3 3h20M6 31h18M11 26v5M22 26v5M27 14v18" /><path d="M24 1h6a1 1 0 0 1 1 1v9a3 3 0 0 1-3 3h-2a3 3 0 0 1-3-3V2a1 1 0 0 1 1-1zM23 5.500h8" /></svg>
                <svg class="size-8" viewBox="0 0 32 32" fill="none" stroke="#fff" stroke-width="2"><path d="M1 12h5l7-6.500v21L6 20.500H1z" stroke-linejoin="round" /><path d="M17.500 11c2 3 2 7 0 10.500M21.500 7.500c4 5 4 12 0 17.500M25.500 4c6 7 6 17 0 24.500" /></svg>
            </button>
            <time class="w-36 text-right" datetime="2025-08-20T10:23:58">10:23:58<br>20/08/2025</time>
        </div>
    </footer>
</body>
</html>
